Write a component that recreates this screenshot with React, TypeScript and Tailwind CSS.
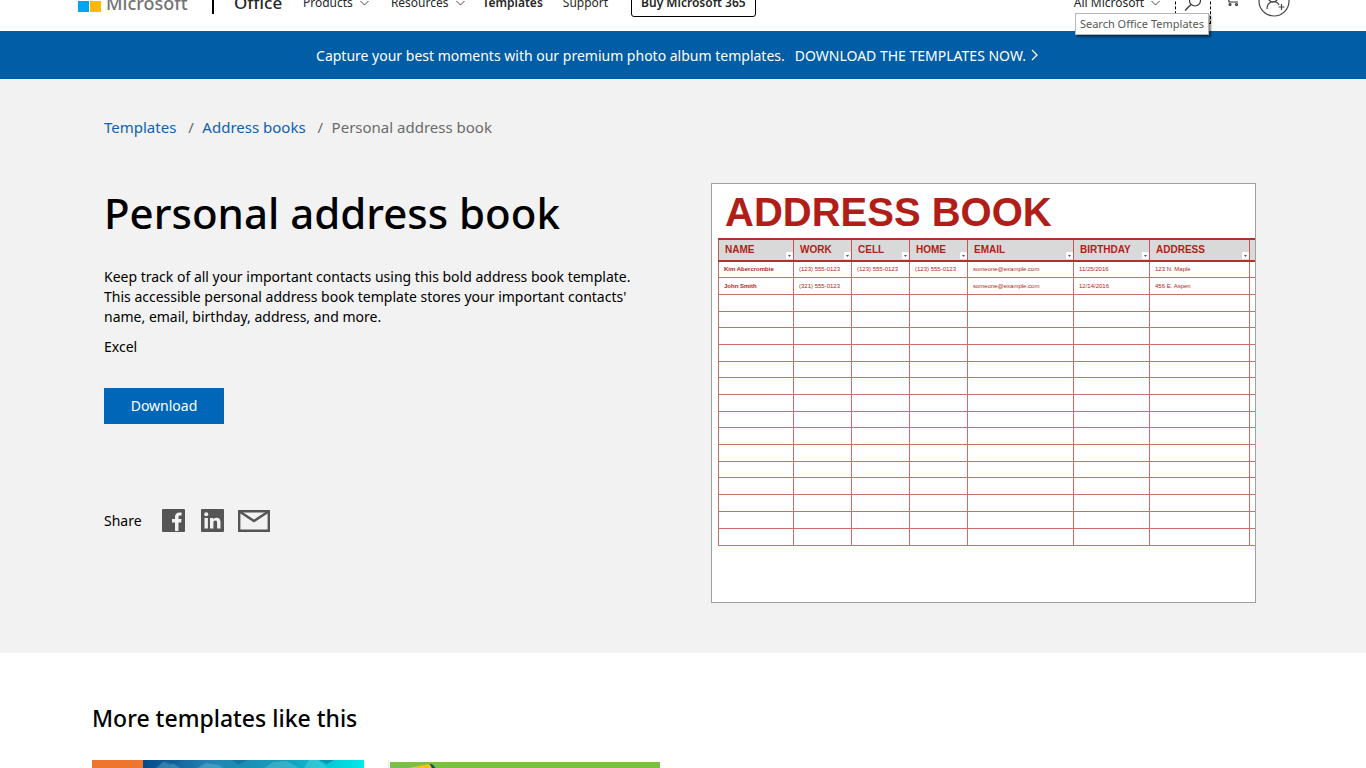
import React from "react";

function Chevron() {
  return (
    <svg width="9" height="6" viewBox="0 0 9 6" fill="none" stroke="#444" aria-hidden="true">
      <path d="M0.5 1 L4.5 5 L8.5 1" />
    </svg>
  );
}

function Header() {
  return (
    <header className="h-[31px] overflow-hidden bg-white">
      <div className="-mt-6 flex h-[54px] items-center pr-[76px] pl-[78px] text-[12px] whitespace-nowrap text-[#262626]">
        <a href="#microsoft" className="flex w-[134px] items-center gap-1 text-[#737373]">
          <svg width="24" height="24" viewBox="0 0 24 24" aria-hidden="true" className="-mt-1">
            <path fill="#f25022" d="M0 0h11v11H0z" />
            <path fill="#7fba00" d="M12 0h11v11H12z" />
            <path fill="#00a4ef" d="M0 12h11v11H0z" />
            <path fill="#ffb900" d="M12 12h11v11H12z" />
          </svg>
          <span className="text-[18px] leading-6 font-medium">Microsoft</span>
        </a>
        <span className="h-[22px] w-[2px] bg-black" />
        <a href="#office" className="ml-5 w-[69px] text-[17px] leading-6 font-medium">Office</a>
        <nav className="flex items-center">
          <button className="flex items-center gap-[7px]">Products <Chevron /></button>
          <button className="ml-[22px] flex items-center gap-[7px]">Resources <Chevron /></button>
          <a href="#templates" className="ml-[18px] font-semibold">Templates</a>
          <a href="#support" className="ml-5">Support</a>
        </nav>
        <a href="#buy" className="ml-[23px] flex h-[28px] items-center rounded-[3px] border border-black px-[9px] font-semibold">
          Buy Microsoft 365
        </a>
        <div className="ml-auto flex items-center">
          <button className="flex items-center gap-[7px]">All Microsoft <Chevron /></button>
          <button aria-label="Search Office Templates" className="ml-[15px] flex h-[42px] w-9 items-center justify-center border border-dashed border-black">
            <svg width="18" height="18" viewBox="0 0 18 18" fill="none" stroke="#333" strokeWidth="1.2">
              <circle cx="11" cy="6.5" r="5.5" />
              <path d="M7 10.5 L1 16.5" />
            </svg>
          </button>
          <button aria-label="Cart" className="ml-[14px] -mt-2">
            <svg width="16" height="16" viewBox="0 0 16 16" fill="none" stroke="#333" strokeWidth="1.2">
              <path d="M1 2h2l1 9h9M4 5h9l-1 3.500H4" />
              <circle cx="5" cy="13.500" r="1" />
              <circle cx="11.500" cy="13.500" r="1" />
            </svg>
          </button>
          <button aria-label="Sign in" className="ml-[17px] -mt-1">
            <svg width="32" height="32" viewBox="0 0 32 32" fill="none" stroke="#444" strokeWidth="1.2">
              <circle cx="16" cy="16" r="15" />
              <circle cx="15" cy="12" r="5" />
              <path d="M9 24c0-9 10-9 12-4M23.500 19v6M20.500 22h6" />
            </svg>
          </button>
        </div>
      </div>
    </header>
  );
}

const columns = [
  { name: "NAME", width: "w-[75px]" },
  { name: "WORK", width: "w-[58px]" },
  { name: "CELL", width: "w-[58px]" },
  { name: "HOME", width: "w-[58px]" },
  { name: "EMAIL", width: "w-[106px]" },
  { name: "BIRTHDAY", width: "w-[76px]" },
  { name: "ADDRESS", width: "w-[100px]" },
  { name: "", width: "w-[30px]" },
];

const people = [
  ["Kim Abercrombie", "(123) 555-0123", "(123) 555-0123", "(123) 555-0123", "someone@example.com", "11/25/2016", "123 N. Maple", ""],
  ["John Smith", "(321) 555-0123", "", "", "someone@example.com", "12/14/2016", "456 E. Aspen", ""],
];

const rows = Array.from({ length: 17 }, (_, i) => people[i] ?? columns.map(() => ""));

function Preview() {
  return (
    <div className="h-[420px] w-[545px] shrink-0 overflow-hidden border border-[#a0a0a0] bg-white font-['Liberation_Sans',Arial,sans-serif] text-[#b01e17]">
      <div className="pt-[4px] pl-[13px] text-[40px] leading-[48px] font-bold">ADDRESS BOOK</div>
      <table className="mt-[2px] ml-[6px] w-[561px] table-fixed border-collapse whitespace-nowrap">
        <thead>
          <tr className="h-[22px] border-y-2 border-[#b5302a] bg-[#d9d9d9]">
            {columns.map((c, i) => (
              <th key={i} className={`${c.width} border-x border-[#c4574f] p-0 text-left text-[10px] leading-[18px]`}>
                <div className="flex justify-between pl-[6px]">
                  {c.name}
                  {c.name && (
                    <svg width="7" height="7" viewBox="0 0 7 7" aria-hidden="true" className="-ml-2 shrink-0 self-end">
                      <path d="M0 0h7v7H0z" fill="#fff" />
                      <path d="M2 3h3L3.500 5z" fill="#555" />
                    </svg>
                  )}
                </div>
              </th>
            ))}
          </tr>
        </thead>
        <tbody>
          {rows.map((row, r) => (
            <tr key={r} className={r < 15 && r % 3 === 0 ? "h-[16px]" : "h-[17px]"}>
              {row.map((cell, c) => (
                <td key={c} className={`border border-[#cb6f68] p-0 pl-[5px] text-[6px] leading-[10px] ${c === 0 ? "font-bold" : ""}`}>
                  {cell}
                </td>
              ))}
            </tr>
          ))}
        </tbody>
      </table>
    </div>
  );
}

function Share() {
  return (
    <div className="mt-[85px] flex items-center text-[14px]">
      <span className="w-[58px]">Share</span>
      <a href="#facebook" aria-label="Facebook">
        <svg width="23" height="23" viewBox="0 0 23 23">
          <rect width="23" height="23" rx="1" fill="#555" />
          <path d="M13 22v-8.500h-3v-3.400h3V8c0-3 1.800-4.600 4.400-4.600 1.200 0 1.900.1 2.200.1v3h-1.500c-1.400 0-1.600.7-1.600 1.700v1.900h3.100l-.5 3.400h-2.600V22z" fill="#f2f2f2" />
        </svg>
      </a>
      <a href="#linkedin" aria-label="LinkedIn" className="ml-4">
        <svg width="23" height="23" viewBox="0 0 23 23">
          <rect width="23" height="23" rx="1" fill="#555" />
          <circle cx="5.200" cy="5.300" r="2" fill="#f2f2f2" />
          <path d="M3.500 9h3.400v10.500H3.500zM9 9h3.200v1.500c.6-1 1.700-1.800 3.200-1.800 3.400 0 4.100 2.200 4.100 5v5.800h-3.400v-5.200c0-1.300 0-2.700-1.800-2.700s-1.900 1.300-1.900 2.700v5.200H9z" fill="#f2f2f2" />
        </svg>
      </a>
      <a href="#email" aria-label="Email" className="ml-[14px]">
        <svg width="32" height="23" viewBox="0 0 32 23" fill="none" stroke="#555" strokeWidth="2.4">
          <path d="M1.200 2.200h29.600v19.600H1.200z" />
          <path d="M1.500 2.500 L16 12 L30.500 2.500" />
        </svg>
      </a>
    </div>
  );
}

function Artwork() {
  return (
    <svg className="h-[150px] w-[272px]" viewBox="0 0 272 150" aria-hidden="true">
      <defs>
        <linearGradient id="sea">
          <stop offset="0" stopColor="#064a88" />
          <stop offset="0.3" stopColor="#2482b2" />
          <stop offset="0.65" stopColor="#119fbb" />
          <stop offset="1" stopColor="#00ebe8" />
        </linearGradient>
      </defs>
      <path d="M51 0h221v150H51z" fill="url(#sea)" />
      <path d="M0 0h51v150H0z" fill="#ed752e" />
      <g fill="#9be4ee" opacity="0.25">
        <path d="M64 8l8-7 10 3 6 4zM105 8l9-5 13 2 4 3zM172 8l9-6 14-1 12 7zM212 8l5-8 9 0 10 8z" />
      </g>
      <path d="M66 0l12 5 13-5zM140 0l6 5 10-5zM227 0l8 4 7-4z" fill="#075d91" opacity="0.45" />
    </svg>
  );
}

export default function App() {
  return (
    <div className="relative h-screen overflow-hidden bg-white font-['Noto_Sans',sans-serif] text-black">
      <Header />
      <div role="tooltip" className="absolute top-[13px] right-[157px] border border-[#b8b8b8] bg-white px-1 text-[11px] leading-5 text-[#575757] shadow-[2px_2px_2px_rgba(0,0,0,0.5)]">
        Search Office Templates
      </div>
      <div className="flex h-12 items-center justify-center gap-[10px] bg-[#005da6] pr-3 text-[14px] whitespace-nowrap text-white">
        <span>Capture your best moments with our premium photo album templates.</span>
        <a href="#album" className="flex items-center gap-[5px]">
          DOWNLOAD THE TEMPLATES NOW.
          <svg width="7" height="12" viewBox="0 0 7 12" fill="none" stroke="#fff" strokeWidth="1.3" aria-hidden="true">
            <path d="M1 1l5 5-5 5" />
          </svg>
        </a>
      </div>
      <main>
        <section className="bg-[#f2f2f2] pt-9 pr-[110px] pb-[50px] pl-[104px]">
          <nav aria-label="Breadcrumb" className="flex text-[15px] leading-6 text-[#6b6b6b]">
            <a href="#templates" className="text-[#1160ab]">Templates</a>
            <span className="ml-3 w-[14px]">/</span>
            <a href="#books" className="text-[#1160ab]">Address books</a>
            <span className="ml-3 w-[14px]">/</span>
            <span>Personal address book</span>
          </nav>
          <div className="mt-11 flex items-start justify-between">
            <div className="w-[545px]">
              <h1 className="text-[42px] leading-[60px] font-medium whitespace-nowrap">Personal address book</h1>
              <p className="mt-6 text-[14px] leading-5">
                Keep track of all your important contacts using this bold address book template. This accessible personal address book template stores your important contacts' name, email, birthday, address, and more.
              </p>
              <p className="mt-[10px] text-[14px] leading-5">Excel</p>
              <button className="mt-[31px] h-9 w-[120px] bg-[#0067b8] pb-px text-[14px] text-white">Download</button>
              <Share />
            </div>
            <Preview />
          </div>
        </section>
        <section className="pl-[92px]">
          <h2 className="pt-[47px] text-[23px] leading-9 font-medium">More templates like this</h2>
          <div className="mt-6 flex gap-6">
            <Artwork />
            <div className="border-l border-[#ececec] pt-[2px] pl-[1px]">
              <svg width="270" height="150" viewBox="0 0 270 150" aria-hidden="true">
                <path d="M0 0h270v150H0z" fill="#7ac143" />
                <path d="M14 7L39 2q6-1 8 9H20z" fill="#ffc20e" />
                <path d="M39 2q6-1 8 9h-4q-1-7-4-9" fill="#07556b" />
              </svg>
            </div>
          </div>
        </section>
      </main>
    </div>
  );
}
